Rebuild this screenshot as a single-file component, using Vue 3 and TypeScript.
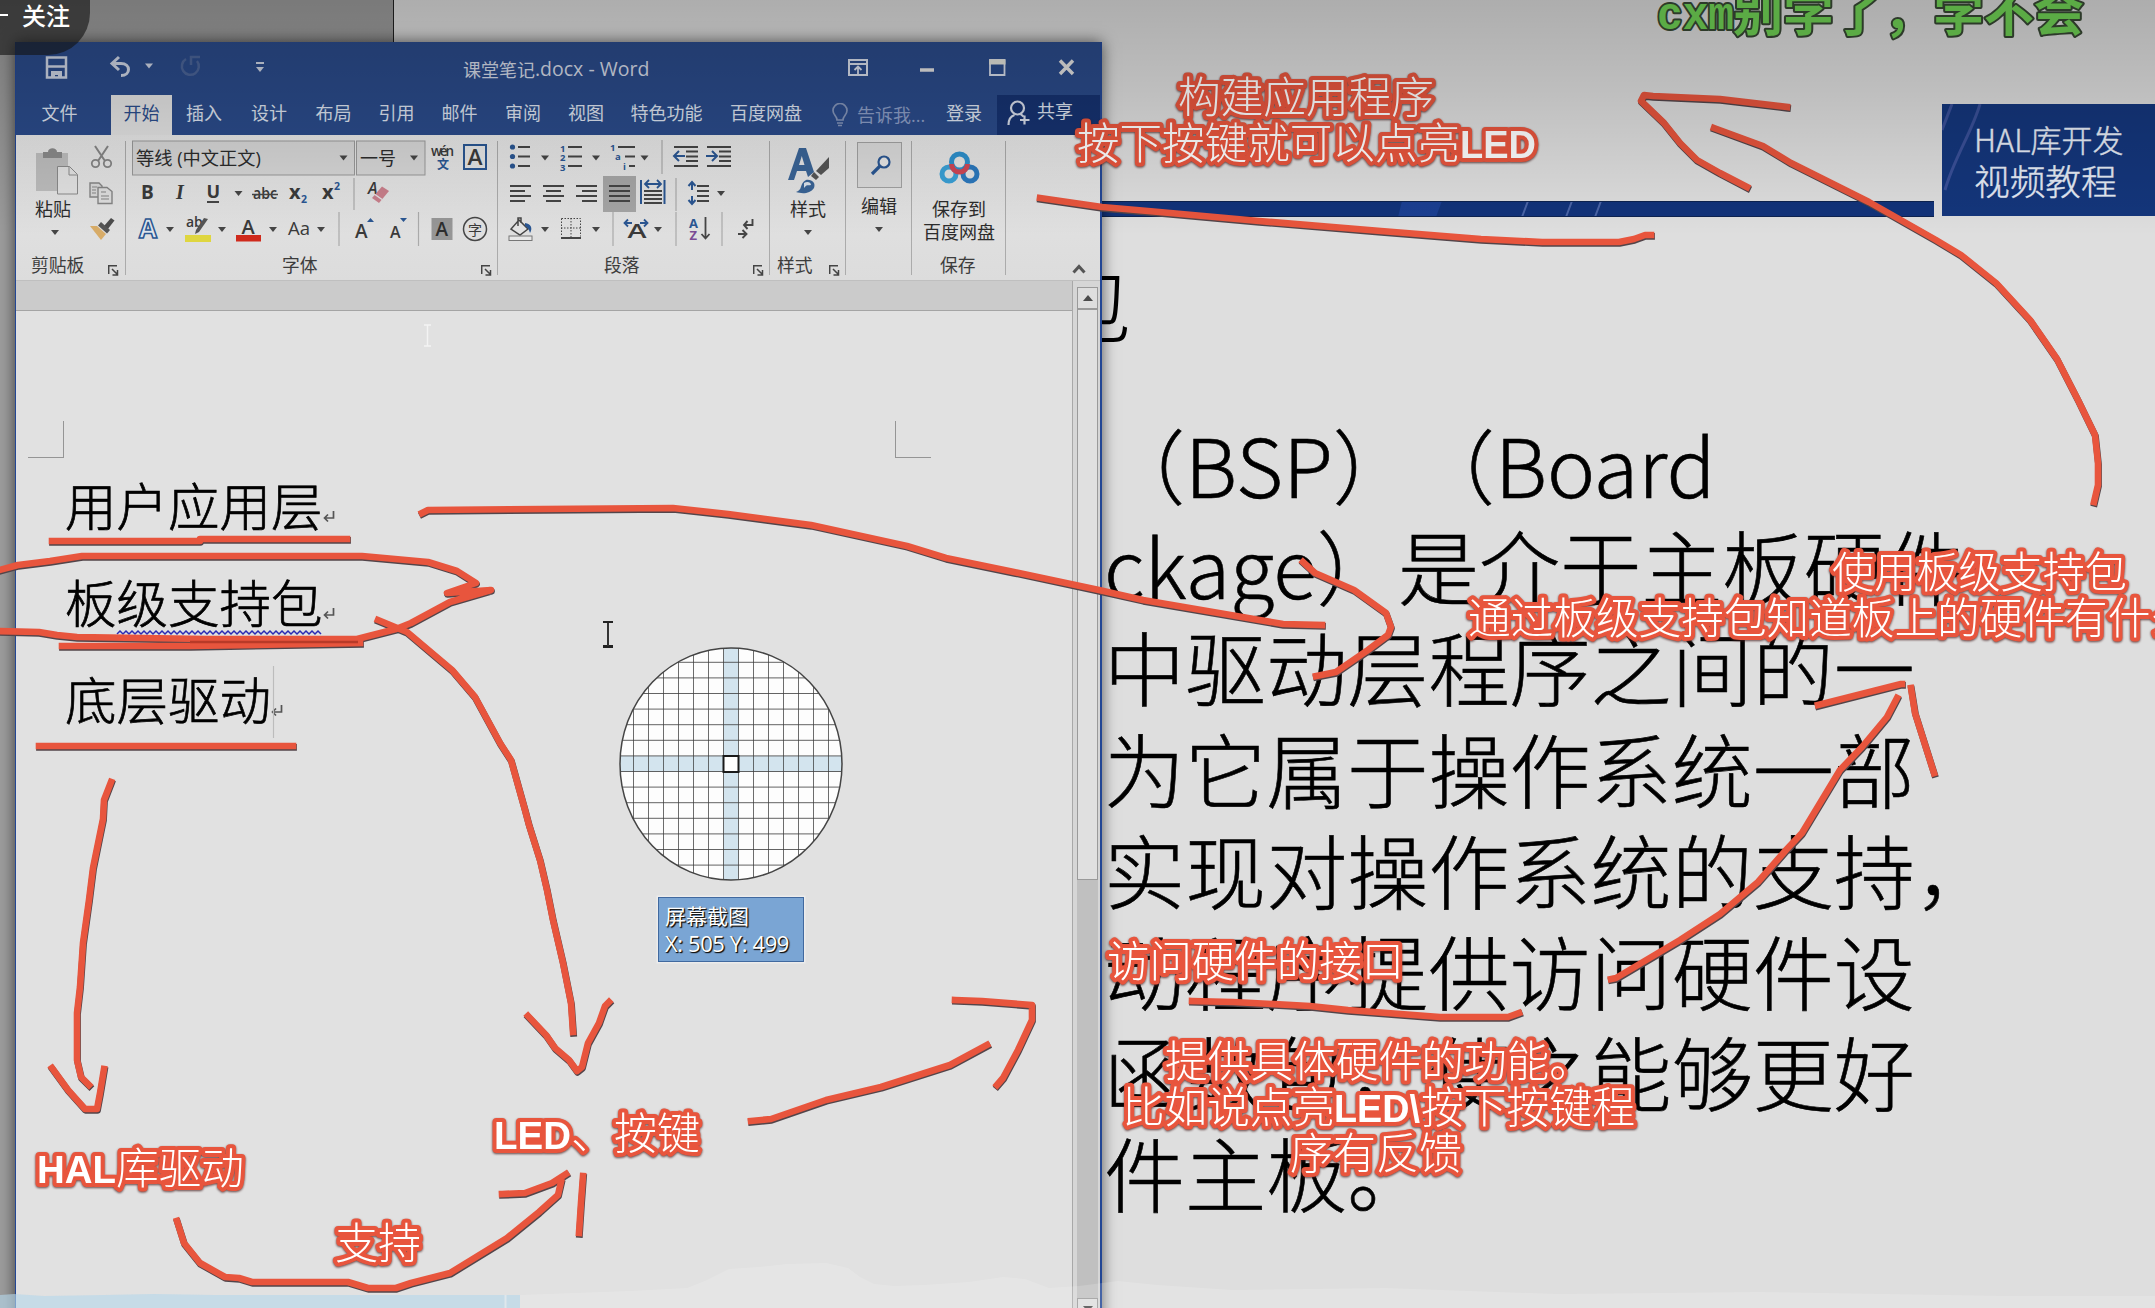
<script setup lang="ts">
interface Cell { x: number; w: number; art: string }
interface Row { y: number; h: number; cells: Cell[] }
interface Note { x: number; y: number; w: number; t: string; latin?: boolean }

const dark = '#454545'
const blue = '#2a5692'

const caret = (cx: number, cy: number) =>
  `<path d="M${cx - 4} ${cy - 2.5}h8l-4 5z" fill="${dark}"/>`
const bar = (x1: number, x2: number, y: number, c = dark) =>
  `<path d="M${x1} ${y}H${x2}" stroke="${c}" stroke-width="2"/>`
const split = (x: number, y1: number, y2: number) =>
  `<path d="M${x} ${y1}V${y2}" stroke="#aaa" stroke-width="1.2"/>`
const txt = (x: number, y: number, size: number, s: string, extra = '', fill = '#3a3a3a') =>
  `<text x="${x}" y="${y}" font-size="${size}" fill="${fill}" ${extra}>${s}</text>`
const c = (x: number, w: number, art: string): Cell => ({ x, w, art })

const bold = 'font-weight="700"'

const fontRows: Row[] = [
  { y: 140, h: 36, cells: [
    c(126, 229, `<rect x="132.5" y="141" width="222" height="34" fill="#d6d6d6" stroke="#999"/>` + txt(136, 165, 18, '等线 (中文正文)', 'textLength="125" lengthAdjust="spacingAndGlyphs"', '#2c2c2c') + caret(343.5, 158)),
    c(355, 72, `<rect x="356.5" y="141" width="68.500" height="34" fill="#d6d6d6" stroke="#999"/>` + txt(360, 165, 18, '一号', '', '#2c2c2c') + caret(414, 158)),
    c(427, 32, txt(431, 156, 13.5, 'wén', 'textLength="23" font-weight="600"') + txt(437, 169, 12, '文', bold, blue)),
    c(459, 39, `<rect x="464" y="145" width="22" height="24" fill="none" stroke="${blue}" stroke-width="2"/>` + txt(467.500, 165, 21, 'A', 'font-weight="600" textLength="15" lengthAdjust="spacingAndGlyphs"')),
  ] },
  { y: 176, h: 36, cells: [
    c(126, 40, txt(141, 199, 19, 'B', bold)),
    c(166, 33, txt(176, 199, 20, 'I', 'font-weight="700" font-style="italic" font-family="Liberation Serif"')),
    c(199, 50, txt(206.500, 198, 18, 'U', bold) + bar(207, 219, 202) + caret(238.5, 193.500)),
    c(249, 34, txt(253, 199, 17, 'abc', 'textLength="24" font-weight="600" lengthAdjust="spacingAndGlyphs"') + `<path d="M252 194.500H278" stroke="${dark}" stroke-width="1.5"/>`),
    c(283, 32, txt(289, 199, 20, 'x', bold) + txt(301, 203, 10.500, '2', bold, blue)),
    c(315, 32, txt(322, 199, 20, 'x', bold) + txt(334, 190, 10.500, '2', bold, blue)),
    c(347, 52, split(354, 178, 210) + txt(368, 194, 16, 'A', 'font-weight="600" font-style="italic"') + `<path d="M382 186.500l7 4.500-10 12-7-5z" fill="#c97f8b"/><path d="M375 194.500l7 5" stroke="#e2e2e2" stroke-width="1.500"/>`),
  ] },
  { y: 212, h: 38, cells: [
    c(126, 54, `<text x="139" y="238" font-size="26" font-weight="700" fill="#dfe6ee" stroke="${blue}" stroke-width="1.5" textLength="18" lengthAdjust="spacingAndGlyphs">A</text>` + caret(170, 229.500)),
    c(180, 49, txt(186, 227, 14, 'ab', 'font-weight="600"') + `<path d="M208 219l-9 13-4 2 1-4 8-12z" fill="#555"/><rect x="185" y="235" width="26" height="7" fill="#dfd640"/>` + caret(222, 229.500)),
    c(229, 52, txt(241.500, 234, 20, 'A', 'font-weight="600"') + `<rect x="236" y="235" width="25" height="6.500" fill="#cf2a1c"/>` + caret(273, 229.500)),
    c(281, 51, txt(288, 235, 19, 'Aa', 'font-weight="500" textLength="22" lengthAdjust="spacingAndGlyphs"') + caret(321, 229.500)),
    c(332, 50, split(339, 212, 246) + txt(355, 238, 19, 'A', 'font-weight="600"') + `<path d="M367 222l3.500-4 3.500 4z" fill="${blue}"/>`),
    c(382, 42, txt(390, 238, 16, 'A', 'font-weight="600"') + `<path d="M400 218h7l-3.500 4z" fill="${blue}"/>` + split(418.500, 212, 246)),
    c(424, 34, `<rect x="431.500" y="218" width="21" height="22" fill="#969696"/>` + txt(435.500, 236, 19, 'A', 'font-weight="600"', '#2d2d2d')),
    c(458, 40, `<circle cx="475" cy="229" r="11.500" fill="none" stroke="${dark}" stroke-width="1.5"/>` + txt(468, 234.500, 14, '字')),
  ] },
]

const bulletArt = [147, 156.500, 166].map((y) => `<circle cx="513.500" cy="${y}" r="2.600" fill="${blue}"/>` + bar(519, 531, y)).join('')
const numberArt = [147, 156.500, 166].map((y, i) => txt(561, y + 4.500, 9.500, String(i + 1), bold, blue) + bar(569, 583, y)).join('')
const lines = (rows: number[][]) => rows.map(([a, b, y]) => bar(a, b, y)).join('')

const paraRows: Row[] = [
  { y: 140, h: 36, cells: [
    c(499, 55, bulletArt + caret(546, 158)),
    c(554, 50, numberArt + caret(597, 158)),
    c(604, 50, txt(611, 151, 9.500, '1', bold, blue) + bar(619, 636, 147) + txt(616, 160, 9.500, 'a', bold, blue) + bar(626, 636, 156.500) + txt(624, 169.500, 9.500, 'i', bold, blue) + bar(630, 636, 166) + caret(645.500, 158)),
    c(654, 47, split(663, 140, 174) + lines([[675, 699, 147], [687, 699, 151.500], [687, 699, 156.500], [687, 699, 161], [675, 699, 166]]) + `<path d="M675 156h11M680 151l-5 5 5 5" fill="none" stroke="${blue}" stroke-width="2"/>`),
    c(701, 69, lines([[708, 732, 147], [720, 732, 151.500], [720, 732, 156.500], [720, 732, 161], [708, 732, 166]]) + `<path d="M707 156h11M713 151l5 5-5 5" fill="none" stroke="${blue}" stroke-width="2"/>`),
  ] },
  { y: 176, h: 36, cells: [
    c(499, 38, lines([[511, 532, 186], [511, 526, 191], [511, 532, 196], [511, 526, 201]])),
    c(537, 34, lines([[544, 565, 186], [547, 562, 191], [544, 565, 196], [547, 562, 201]])),
    c(571, 33, lines([[577, 598, 186], [583, 598, 191], [577, 598, 196], [583, 598, 201]])),
    c(604, 34, `<rect x="604" y="176" width="33" height="36" fill="#a5a5a5"/>` + lines([[610, 631, 186], [610, 631, 191], [610, 631, 196], [610, 631, 201]])),
    c(638, 46, `<path d="M642 180v24M665.500 180v24" stroke="${blue}" stroke-width="2"/><path d="M646 184h16M650 180l-4 4 4 4M658 180l4 4-4 4" fill="none" stroke="${blue}" stroke-width="1.800"/>` + lines([[645, 663, 191], [645, 663, 195], [645, 663, 199], [645, 663, 203]]) + split(677, 178, 211)),
    c(684, 86, `<path d="M693 182v8M689.500 186l3.500-4 3.500 4M693 196v8M689.500 200l3.500 4 3.500-4" fill="none" stroke="${blue}" stroke-width="2"/>` + lines([[698, 710, 186], [698, 710, 191], [698, 710, 196], [698, 710, 201]]) + caret(722, 193.500)),
  ] },
  { y: 212, h: 38, cells: [
    c(499, 55, `<path d="M520 220l9 9-8 6-9-6zM519 226v-8h3v5" fill="#e4e4e4" stroke="${dark}" stroke-width="1.500"/><path d="M526 223c6 1 8 5 5 10-1-4-2-5-5-7z" fill="${blue}"/><rect x="510" y="236" width="23" height="4.500" fill="#e8e8e8" stroke="#777"/>` + caret(546, 229.500)),
    c(554, 54, `<path d="M562.500 218.500h19v18M562.500 218.500v18M572 218v19M562 228h20" fill="none" stroke="${dark}" stroke-dasharray="1.500 1.500"/>` + bar(562, 582, 238) + caret(597, 229.500)),
    c(608, 60, split(614, 212, 246) + txt(628.500, 238, 19, 'A', 'font-weight="600" textLength="19" lengthAdjust="spacingAndGlyphs"') + `<path d="M626 223h7M629 219.500l-3.500 3.500 3.500 3.500M641 223h7M645 219.500l3.500 3.500-3.500 3.500" fill="none" stroke="${blue}" stroke-width="1.800"/>` + caret(659, 229.500)),
    c(668, 60, split(677, 212, 246) + txt(690, 228, 13, 'A', bold, blue) + txt(690.500, 240, 13, 'Z', bold, '#7a4a94') + `<path d="M706.500 217v21M702.500 234l4 4.500 4-4.500" fill="none" stroke="${dark}" stroke-width="1.800"/>` + split(723, 212, 246)),
    c(728, 42, `<path d="M753.500 219v6h-8M748.500 221l-3.500 4 3.500 4M739 234h8M743.500 230l4 4-4 4" fill="none" stroke="${dark}" stroke-width="1.900"/>`),
  ] },
]

const tabs = ['插入', '设计', '布局', '引用', '邮件', '审阅', '视图', '特色功能', '百度网盘']

const slideLines = [
  '（BSP）（Board', 'ckage）是介于主板硬件', '中驱动层程序之间的一', '为它属于操作系统一部',
  '实现对操作系统的支持，', '动程序提供访问硬件设', '函数包，使之能够更好', '件主板。',
]

const strokes: string[] = [
  '1040,198 1102,207 1148,211 1259,221 1381,231 1481,239 1542,242 1619,242 1634,239 1645,235 1651,235',
  '1787,107 1720,99 1653,96 1644,95 1641,101 1664,123 1680,143 1697,160 1720,173 1747,187',
  '1714,128 1763,146 1791,163 1869,202 1936,240 1961,255 1996,283 2030,320 2057,359 2078,400 2095,435 2098,463 2098,485 2094,502',
  '52,541 200,541 200,539 347,539',
  '-4,571 18,565 50,561 82,556 362,556 428,562 457,571 476,583 447,593 491,590 450,602 411,623 396,629 357,639 207,639 77,637 57,635 39,632 -4,631',
  '62,646 190,646 360,643',
  '39,746 293,746',
  '111,782 104,800 103,819 93,868 89,900 83,943 80,987 77,1013 77,1060 81,1077 89,1085',
  '52,1068 68,1090 85,1109 97,1109 100,1093 104,1069',
  '378,620 407,632 452,670 475,697 500,743 511,760 525,810 529,825 540,860 547,890 553,920 563,963 571,1003 573,1032',
  '528,1016 546,1035 555,1048 569,1060 577,1071 582,1067 588,1043 599,1023 605,1006 609,1002',
  '751,1121 771,1119 826,1100 881,1087 950,1065 987,1045',
  '955,1000 982,1001 1032,1005 1032,1020 1018,1050 1003,1078 997,1085',
  '177,1221 184,1243 200,1263 225,1277 239,1278 252,1282 348,1282 368,1288 396,1288 411,1283 450,1273 507,1238 539,1212 558,1195 561,1182',
  '502,1194 525,1193 552,1183 566,1174',
  '583,1176 581,1203 579,1233',
  '422,513 428,510 543,509 673,508 728,514 811,525 907,546 946,558 1014,572 1099,590 1143,600 1283,624 1322,625',
  '1303,562 1315,573 1354,590 1386,613 1391,627 1388,635 1368,650 1336,672 1316,676',
  '1897,698 1887,717 1862,747 1840,770 1802,833 1786,850 1758,882 1720,914 1680,940 1616,978 1611,979',
  '1818,705 1901,684 1902,684',
  '1911,688 1915,713 1934,773',
  '1192,1001 1233,1002 1310,1006 1348,1010 1440,1017 1508,1017 1519,1013',
]

const notes: Note[] = [
  { x: 1178, y: 113, w: 256, t: '构建应用程序' },
  { x: 1077, y: 159, w: 383, t: '按下按键就可以点亮' },
  { x: 1460, y: 158, w: 76, t: 'LED', latin: true },
  { x: 1832, y: 588, w: 295, t: '使用板级支持包' },
  { x: 1468, y: 634, w: 725, t: '通过板级支持包知道板上的硬件有什么' },
  { x: 1107, y: 977, w: 297, t: '访问硬件的接口' },
  { x: 1165, y: 1077, w: 427, t: '提供具体硬件的功能。' },
  { x: 1122, y: 1123, w: 213, t: '比如说点亮' },
  { x: 1334, y: 1122, w: 86, t: 'LED\\', latin: true },
  { x: 1421, y: 1123, w: 214, t: '按下按键程' },
  { x: 1290, y: 1169, w: 172, t: '序有反馈' },
  { x: 37, y: 1183, w: 79, t: 'HAL', latin: true },
  { x: 116, y: 1184, w: 128, t: '库驱动' },
  { x: 494, y: 1149, w: 77, t: 'LED', latin: true },
  { x: 571, y: 1149, w: 129, t: '、按键' },
  { x: 335, y: 1259, w: 86, t: '支持' },
]

const steps = Array.from({ length: 15 }, (_, i) => i - 7)
const wave = 'M117 634' + Array.from({ length: 34 }, () => 'l3 -3 l3 3').join('')
</script>

<template>
  <div class="screen">
    <div class="gutter"></div>

    <section class="slide">
      <div class="slide-title">包</div>
      <svg class="stripe" viewBox="0 0 832 16">
        <rect width="832" height="16" fill="#12337a" />
        <path d="M300 0h40l-6 16h-38z" fill="#1b3f92" />
        <path d="M426 0l-6 16M470 0l-6 16M499 0l-6 16" stroke="#4a64a6" stroke-width="2" />
        <path d="M0 .500H832M0 15.500H832" stroke="#0d2350" />
      </svg>
      <div class="badge">
        <svg class="badge-art" viewBox="0 0 213 112">
          <path d="M10 0L0 26M38 0C30 28 12 54 3 86" fill="none" stroke="#3a5098" stroke-width="3" />
        </svg>
        <span class="badge-a">HAL库开发</span>
        <span class="badge-b">视频教程</span>
      </div>
      <div class="slide-body">
        <div v-for="l in slideLines" :key="l" class="slide-line">{{ l }}</div>
      </div>
    </section>

    <section class="word">
      <header class="title">
        <svg class="qat" viewBox="16 42 300 53">
          <path d="M47 57.500h19v20h-19z" fill="none" stroke="#ccd3e2" stroke-width="2.500" />
          <path d="M48 66.500h17" stroke="#ccd3e2" stroke-width="2.500" />
          <path d="M51 71h11v7h-4v-3h-3v3h-4z" fill="#ccd3e2" />
          <path d="M119 57l-7 6.500 7 6.500M112 63.500h9c10 0 10 12 0 12" fill="none" stroke="#ccd3e2" stroke-width="3" />
          <path d="M145 63.500h8l-4 5z" fill="#ccd3e2" />
          <path d="M186 59a8.500 8.500 0 1 0 11 2M191 65v-8h9" fill="none" stroke="#4a6396" stroke-width="2.500" />
          <path d="M256 63h8" stroke="#ccd3e2" stroke-width="2" />
          <path d="M256 67h8l-4 5z" fill="#ccd3e2" />
        </svg>
        <span class="caption"><span class="caption-cjk">课堂笔记</span><span class="caption-lat">.docx - Word</span></span>
        <svg class="controls" viewBox="840 42 260 53">
          <path d="M849 60h18v15h-18zM849 64h18" fill="none" stroke="#d5dbe8" stroke-width="2" />
          <path d="M858 74v-7M854.500 70l3.500-3.500 3.500 3.500" fill="none" stroke="#d5dbe8" stroke-width="1.800" />
          <path d="M920 70h14" stroke="#e0e0e0" stroke-width="3.500" />
          <path d="M990 60h14.500v15h-14.500z" fill="none" stroke="#d5dbe8" stroke-width="1.800" />
          <path d="M989 62h16.500" stroke="#e0e0d8" stroke-width="5" />
          <path d="M1060 60.500l13 13.500M1073 60.500l-13 13.500" stroke="#e0e0e0" stroke-width="3.400" />
        </svg>
      </header>

      <nav class="tabs">
        <span class="tab file">文件</span>
        <span class="tab active">开始</span>
        <span v-for="t in tabs" :key="t" class="tab">{{ t }}</span>
        <span class="tell">
          <svg viewBox="0 0 16 24" width="16" height="24">
            <path d="M5 17c0-4-4-5-4-9.500a7 7 0 0 1 14 0c0 4.500-4 5.500-4 9.500zM5 20h6M6 22.500h4" fill="none" stroke="#8394b8" stroke-width="1.700" />
          </svg>
          <span>告诉我...</span>
        </span>
        <span class="tab login">登录</span>
        <span class="share">
          <svg viewBox="0 0 24 26" width="24" height="26">
            <circle cx="10.500" cy="8" r="6.500" fill="none" stroke="#d5dbe8" stroke-width="2.200" />
            <path d="M1.500 25c0-6 3-9 6-10M13.500 14l3 2.500M17.500 15.500v9M13 20h9.500" fill="none" stroke="#d5dbe8" stroke-width="2.200" />
          </svg>
          <span>共享</span>
        </span>
      </nav>

      <div class="ribbon">
        <div class="group clip">
          <div class="tools">
            <div class="paste">
              <svg viewBox="32 146 48 50" width="48" height="50">
                <path d="M36 153h32v38h-32z" fill="#bdbdbd" />
                <path d="M43 152h5c0-5 9-5 9 0h5v6h-19z" fill="#8a8a8a" />
                <path d="M57.500 166.500h12l8 8v19.500h-20z" fill="#e2e2e2" stroke="#8a8a8a" />
                <path d="M69 166.500v8.500h8" fill="none" stroke="#8a8a8a" />
              </svg>
              <span>粘贴</span>
              <i class="drop"></i>
            </div>
            <div class="minis">
              <svg viewBox="88 144 28 26" width="28" height="26">
                <path d="M95 146l10 15M108 146l-10 15" stroke="#858585" stroke-width="2" />
                <circle cx="95.500" cy="163.500" r="3.700" fill="none" stroke="#858585" stroke-width="1.800" />
                <circle cx="107.500" cy="163.500" r="3.700" fill="none" stroke="#858585" stroke-width="1.800" />
              </svg>
              <svg viewBox="88 181 28 24" width="28" height="24">
                <path d="M90 183h9l3 3v11h-12z" fill="#d8d8d8" stroke="#858585" stroke-width="1.400" />
                <path d="M98 187.500h9l5 4v12h-14z" fill="#dedede" stroke="#858585" stroke-width="1.400" />
                <path d="M92 187h5M92 190h4M92 193h4M101 192h5M101 196h8M101 199h8" stroke="#858585" />
              </svg>
              <svg viewBox="88 216 28 25" width="28" height="25">
                <path d="M104 226l7-8 3.500 2.500-7 9z" fill="#4c4c4c" />
                <path d="M101 222l9 8-3 3.500-9-8z" fill="#555" />
                <path d="M97 226l9 8-5 6-11-14z" fill="#d8ac68" />
              </svg>
            </div>
          </div>
          <footer><span>剪贴板</span><svg class="launch" viewBox="0 0 11 11"><path d="M.700 9V.700H9M4 4l5 5M9.500 5v5h-5" /></svg></footer>
        </div>

        <div class="group font">
          <div v-for="r in fontRows" :key="r.y" class="row">
            <svg v-for="k in r.cells" :key="k.x" :width="k.w" :height="r.h" :viewBox="`${k.x} ${r.y} ${k.w} ${r.h}`" v-html="k.art"></svg>
          </div>
          <footer><span>字体</span><svg class="launch" viewBox="0 0 11 11"><path d="M.700 9V.700H9M4 4l5 5M9.500 5v5h-5" /></svg></footer>
        </div>

        <div class="group para">
          <div v-for="r in paraRows" :key="r.y" class="row">
            <svg v-for="k in r.cells" :key="k.x" :width="k.w" :height="r.h" :viewBox="`${k.x} ${r.y} ${k.w} ${r.h}`" v-html="k.art"></svg>
          </div>
          <footer><span>段落</span><svg class="launch" viewBox="0 0 11 11"><path d="M.700 9V.700H9M4 4l5 5M9.500 5v5h-5" /></svg></footer>
        </div>

        <div class="group styles">
          <div class="big">
            <svg viewBox="786 146 48 50" width="48" height="50">
              <path d="M790 180l11-32h7l8 24-6 5-2-6h-9l-3 9zM801 165h5.500l-2.700-9z" fill="#3a6496" />
              <path d="M831 157v11l-8 7-5-4z" fill="#555" />
              <path d="M816 172l5 5-3 3-5-4z" fill="#555" />
              <path d="M798 192c7-2 3-8 10-12 6-1 10 3 8 8-4 6-12 6-18 4z" fill="#3a6496" />
              <path d="M806 183c3-2 7-1 7 2-3 1-4-1-7 3z" fill="#dbe3ec" />
            </svg>
            <span>样式</span>
            <i class="drop"></i>
          </div>
          <footer><span>样式</span><svg class="launch" viewBox="0 0 11 11"><path d="M.700 9V.700H9M4 4l5 5M9.500 5v5h-5" /></svg></footer>
        </div>

        <div class="group edit">
          <div class="big">
            <svg viewBox="855 141 47 48" width="47" height="48">
              <rect x="856.500" y="142.500" width="44" height="45" fill="#dadada" stroke="#a2a2a2" />
              <circle cx="883" cy="162" r="5.500" fill="#e6e6e6" stroke="#2a5692" stroke-width="2.200" />
              <path d="M879 166l-8 8" stroke="#2a5692" stroke-width="3.200" />
            </svg>
            <span>编辑</span>
            <i class="drop"></i>
          </div>
        </div>

        <div class="group save">
          <div class="big">
            <svg viewBox="936 148 44 40" width="44" height="40">
              <circle cx="958.500" cy="162" r="8" fill="none" stroke="#2d8fcb" stroke-width="5" />
              <circle cx="948" cy="174" r="7" fill="none" stroke="#3aa0d6" stroke-width="5" />
              <circle cx="969" cy="174" r="7" fill="none" stroke="#2b78bd" stroke-width="5" />
              <path d="M950.500 164a8 8 0 1 0 16 0" fill="none" stroke="#cf4655" stroke-width="5" />
            </svg>
            <span>保存到</span>
            <span>百度网盘</span>
          </div>
          <footer><span>保存</span></footer>
        </div>

        <div class="tail">
          <svg viewBox="0 0 14 10" width="14" height="10"><path d="M1.500 8.500L7 2.500l5.500 6" fill="none" stroke="#555" stroke-width="3" /></svg>
        </div>
      </div>

      <div class="work">
        <div class="sheet">
          <div class="ruler"></div>
          <div class="page">
            <div class="corners"><i class="corner left"></i><i class="corner right"></i></div>
            <p>用户应用层<svg class="ret" viewBox="0 0 12 12"><path d="M10.500 0v7H2M5 3.500L1.500 7 5 10.500" /></svg></p>
            <p>板级支持包<svg class="ret" viewBox="0 0 12 12"><path d="M10.500 0v7H2M5 3.500L1.500 7 5 10.500" /></svg></p>
            <p>底层驱动<svg class="ret" viewBox="0 0 12 12"><path d="M10.500 0v7H2M5 3.500L1.500 7 5 10.500" /></svg></p>
          </div>
        </div>
        <div class="scroll">
          <div class="sbtn"><svg viewBox="0 0 10 6" width="10" height="6"><path d="M0 6l5-6 5 6z" fill="#4b4b4b" /></svg></div>
          <div class="thumb"></div>
          <div class="track"></div>
          <div class="sbtn"><svg viewBox="0 0 10 6" width="10" height="6"><path d="M0 0h10l-5 6z" fill="#4b4b4b" /></svg></div>
        </div>
      </div>
    </section>

    <svg class="layer" viewBox="0 0 2155 1308">
      <path :d="wave" fill="none" stroke="#2b2bb4" stroke-width="1.500" />
      <path d="M273.500 666v72" stroke="#bcbcbc" stroke-width="1.200" />
      <path d="M424 325h3.500v21h-3.500M431 325h-3.500v21h3.500" fill="none" stroke="#f3f3f3" stroke-width="1.500" />
      <path d="M603 622h10M603 647h10M608 622v25" fill="none" stroke="#222" stroke-width="1.800" />
      <path d="M603 646.500h4M609 646.500h4" stroke="#222" stroke-width="3" />
      <clipPath id="lens"><ellipse cx="731" cy="764" rx="111" ry="116" /></clipPath>
      <g clip-path="url(#lens)">
        <rect x="619" y="647" width="224" height="234" fill="#fdfdfd" />
        <rect x="723.500" y="647" width="15" height="234" fill="#d3e4ee" />
        <rect x="619" y="756" width="224" height="15.600" fill="#d3e4ee" />
        <path v-for="s in steps" :key="'v' + s" :d="`M${723.5 + s * 15} 647V881M${738.5 + s * 15} 647V881`" stroke="#3c3c3c" stroke-opacity=".5" />
        <path v-for="s in steps" :key="'h' + s" :d="`M619 ${755.9 + s * 15.6}H843`" stroke="#3c3c3c" stroke-opacity=".8" />
      </g>
      <ellipse cx="731" cy="764" rx="111" ry="116" fill="none" stroke="#444" stroke-width="1.500" />
      <rect x="723.500" y="756" width="15" height="16" fill="#fff" stroke="#1a1a1a" stroke-width="2" />
    </svg>

    <div class="tip"><span class="tip-a">屏幕截图</span><span class="tip-b">X: 505 Y: 499</span></div>

    <svg class="layer" viewBox="0 0 2155 1308">
      <g fill="none" stroke-linejoin="round" stroke-linecap="square">
        <g stroke="#53454a" stroke-width="6.800" transform="translate(.5 1.300)">
          <polyline v-for="(s, i) in strokes" :key="i" :points="s" />
        </g>
        <g stroke="#e8553d" stroke-width="6.600">
          <polyline v-for="(s, i) in strokes" :key="i" :points="s" />
        </g>
      </g>
      <path d="M190 642H358" stroke="#b83a28" stroke-width="2.500" />
      <g class="notes">
        <text v-for="n in notes" :key="n.t + n.y" :x="n.x" :y="n.y" :textLength="n.w" :class="{ latin: n.latin }" lengthAdjust="spacingAndGlyphs">{{ n.t }}</text>
      </g>
    </svg>

    <div class="shade"></div>

    <svg class="layer" viewBox="0 0 2155 1308">
      <path d="M0 1295l14-1 30 2 60-1 50-1 60 1H520v13H0z" fill="#b4d7ea" fill-opacity=".62" />
      <path d="M505.500 1295v13" stroke="#dfe7ec" stroke-width="2" />
      <path d="M520 1295l110-4 57-3 20-8 22-11 30-2 28-3 39-1 22 5 12 9 14 7 20 2 30-1 45-3 34-5 22 2 24 9 30-2 39-5 40 4 75 5 153-2 172 6 200-2 250 4 147 0V1308H520z" fill="#fff" fill-opacity=".16" />
      <g class="danmu">
        <text x="1657" y="29" textLength="77" lengthAdjust="spacingAndGlyphs" class="mono">cxm</text>
        <text x="1733" y="31" textLength="351" lengthAdjust="spacingAndGlyphs">别学了，学不会</text>
      </g>
    </svg>

    <div class="follow"><i></i><span>关注</span></div>
  </div>
</template>

<style>
body { background: #dedede; }
</style>

<style scoped>
.screen {
  position: relative;
  width: 2155px;
  height: 1308px;
  overflow: hidden;
  background: #dedede;
  font-family: "Open Sans", "Noto Sans CJK SC", sans-serif;
}
.gutter {
  position: absolute;
  inset: 0 auto 0 0;
  width: 393px;
  background: #9c9c9c;
  border-right: 1.500px solid #222;
}
.layer { position: absolute; inset: 0; width: 2155px; height: 1308px; }
.shade {
  position: absolute;
  inset: 0 0 auto 0;
  height: 235px;
  background: linear-gradient(rgba(0, 0, 0, 0.22), rgba(0, 0, 0, 0.14) 40%, rgba(0, 0, 0, 0));
}

.slide { font-family: "Noto Sans CJK SC", sans-serif; font-weight: 300; color: #000; }
.slide-title { position: absolute; left: 1045px; top: 245px; font-size: 86px; line-height: 110px; }
.stripe { position: absolute; left: 1102px; top: 201px; width: 832px; height: 16px; }
.badge {
  position: absolute;
  left: 1942px;
  top: 104px;
  width: 181px;
  height: 112px;
  padding-left: 32px;
  display: flex;
  flex-direction: column;
  justify-content: center;
  background: #14367c;
  color: #e6ecf6;
  white-space: nowrap;
}
.badge-art { position: absolute; inset: 0; width: 213px; height: 112px; }
.badge-a { font-size: 31px; line-height: 40px; -webkit-text-stroke: 0.400px #e6ecf6; }
.badge-b { font-size: 35.700px; line-height: 42px; -webkit-text-stroke: 0.400px #e6ecf6; }
.slide-body { position: absolute; left: 1104px; top: 412px; }
.slide-line {
  font-size: 81.100px;
  line-height: 101.200px;
  white-space: nowrap;
  text-spacing-trim: space-all;
  -webkit-text-stroke: 0.600px #000;
}

.word {
  position: absolute;
  left: 15px;
  top: 42px;
  width: 1084px;
  height: 1280px;
  border: 2px solid #234795;
  border-top: 0;
  border-left-width: 1px;
  background: #e1e1e1;
  box-shadow: 0 0 14px rgba(0, 0, 0, 0.6);
}
.title {
  height: 53px;
  display: flex;
  background: #2a4a89;
}
.qat { width: 300px; height: 53px; }
.controls { width: 260px; height: 53px; }
.caption {
  flex: 1;
  margin-left: 147px;
  display: flex;
  align-items: center;
  font-size: 18px;
  color: #d3d9e6;
  white-space: nowrap;
}
.caption-cjk { width: 72px; }
.caption-lat { font-size: 19.500px; }
.tabs {
  height: 40px;
  display: grid;
  grid-template-columns: 95px 61px 64px 66px 63px 63px 63px 64px 62px 99px 100px 117px 64px 103px;
  align-items: stretch;
  background: #2a4a89;
  color: #dbe1ee;
  font-size: 18px;
  line-height: 36px;
  text-align: center;
}
.file { padding-right: 8px; }
.login { padding-right: 2px; }
.tab.active { background: #e2e2e2; color: #2b4d8c; }
.tell {
  display: flex;
  align-items: center;
  gap: 9px;
  padding-left: 16px;
  color: #8a9cc4;
  font-size: 18px;
}
.share { display: flex; gap: 6px; padding: 5px 0 0 10px; background: #163270; }
.share span { line-height: 22px; }

.ribbon {
  height: 146px;
  display: flex;
  background: linear-gradient(#e6e6e6, #dcdcdc);
  border-bottom: 1px solid #bfbfbf;
  box-sizing: border-box;
  color: #2c2c2c;
  font-size: 18px;
}
.group {
  position: relative;
  box-sizing: border-box;
  padding-top: 5px;
  display: flex;
  flex-direction: column;
}
.group::after {
  content: "";
  position: absolute;
  right: 0;
  top: 6px;
  height: 134px;
  width: 1px;
  background: #ababab;
}
.clip { width: 110px; }
.font { width: 372px; }
.para { width: 272px; }
.styles { width: 76px; }
.edit { width: 66px; }
.save { width: 94px; }
.row { display: flex; }
.row svg { display: block; }
.group footer {
  margin-top: auto;
  height: 30px;
  padding-right: 6px;
  display: flex;
  align-items: center;
  font-size: 17.800px;
  line-height: 24px;
  color: #3c3c3c;
}
.group footer span { flex: 1; white-space: nowrap; }
.clip footer { padding: 0 7px 0 15px; }
.font footer { padding-left: 156px; }
.para footer { padding-left: 106px; }
.styles footer { padding-left: 7px; }
.save footer { padding-left: 28px; }
.launch { width: 11px; height: 11px; margin-top: 10px; fill: none; stroke: #444; stroke-width: 1.500; }
.tools { display: flex; }
.paste { width: 72px; padding: 6px 0 0 10px; box-sizing: border-box; display: flex; flex-direction: column; align-items: flex-start; }
.paste svg { margin-left: 6px; }
.paste span { margin-left: 9px; line-height: 24px; margin-top: 1px; }
.paste .drop { margin: 9px 0 0 25px; }
.minis { display: flex; flex-direction: column; gap: 11px; padding-top: 4px; }
.drop { width: 0; height: 0; border: 4.500px solid transparent; border-top: 5px solid #454545; border-bottom: 0; }
.big { display: flex; flex-direction: column; align-items: center; padding-top: 6px; }
.big span { line-height: 23px; white-space: nowrap; }
.styles .big span { margin-top: 2px; }
.styles .big .drop { margin-top: 9px; }
.edit .big { padding-top: 1px; }
.edit .big span { margin-top: 6px; }
.edit .big .drop { margin-top: 9px; }
.save .big { padding-top: 8px; }
.save .big svg + span { margin-top: 10px; }
.tail { flex: 1; display: flex; justify-content: flex-end; align-items: flex-end; padding: 0 14px 6px 0; }

.work { height: 1040px; display: flex; }
.sheet { width: 1056px; border-right: 1px solid #a8a8a8; }
.ruler { height: 29px; background: #cbcbcb; border-bottom: 1px solid #a4a4a4; }
.page { padding-left: 49px; background: #e1e1e1; }
.corners { height: 147px; display: flex; align-items: flex-end; gap: 831px; margin-left: -37px; margin-bottom: 1px; }
.corner { width: 35px; height: 36px; border-bottom: 1.500px solid #959595; }
.corner.left { border-right: 1.500px solid #959595; }
.corner.right { border-left: 1.500px solid #959595; }
.page p {
  margin: 0;
  height: 97px;
  line-height: 90px;
  font-family: "Noto Sans CJK SC", sans-serif;
  font-size: 51.500px;
  font-weight: 300;
  color: #000;
  -webkit-text-stroke: 0.700px #000;
  white-space: nowrap;
}
.ret { width: 12px; height: 12px; fill: none; stroke: #555; stroke-width: 1.700; position: relative; top: -3px; }
.scroll {
  flex: 1;
  height: 1037px;
  padding: 6px 2px 0 4px;
  display: flex;
  flex-direction: column;
  background: #d6d6d6;
}
.sbtn { height: 22px; border: 1px solid #9a9a9a; background: #dedede; display: flex; align-items: center; justify-content: center; box-sizing: border-box; }
.thumb { height: 571px; border: 1px solid #9a9a9a; background: #e0e0e0; box-sizing: border-box; }
.track { height: 418px; background: #c0c0c0; }

.tip {
  position: absolute;
  left: 658px;
  top: 897px;
  width: 146px;
  height: 65px;
  box-sizing: border-box;
  border: 1px solid #41699f;
  background: #7aa5d4;
  box-shadow: 0 0 0 1.500px #ececec;
  padding: 5px 0 0 6px;
  display: flex;
  flex-direction: column;
  color: #fff;
  font-size: 21px;
  line-height: 27px;
  text-shadow: 1px 1px 1px #111, 1px 1px 1px #222;
  white-space: nowrap;
}
.tip-b { font-size: 22px; letter-spacing: -0.400px; }

.notes {
  font-family: "Noto Sans CJK SC", sans-serif;
  font-size: 42.700px;
  font-weight: 300;
  fill: #fff;
  stroke: #e8553d;
  stroke-width: 8px;
  stroke-linejoin: round;
  paint-order: stroke;
  filter: drop-shadow(0.500px 1.500px 1px rgba(70, 30, 30, 0.8));
}
.latin { font-family: "Liberation Sans", sans-serif; font-size: 38px; font-weight: 700; }
.danmu {
  font-family: "Noto Sans CJK SC", sans-serif;
  font-size: 50px;
  font-weight: 700;
  fill: #5bab45;
  stroke: #2d3a2a;
  stroke-width: 4px;
  stroke-linejoin: round;
  paint-order: stroke;
}
.mono { font-family: "Liberation Mono", monospace; font-size: 46px; }
.follow {
  position: absolute;
  left: 0;
  top: 0;
  width: 90px;
  height: 55px;
  border-radius: 0 0 42px 0;
  background: rgba(20, 20, 20, 0.620);
  color: #fff;
  display: flex;
  gap: 14px;
  font-family: "Noto Sans CJK SC", sans-serif;
  font-size: 24px;
  font-weight: 500;
  line-height: 30px;
}
.follow i { width: 8px; height: 2px; margin-top: 14px; background: #fff; }
</style>
